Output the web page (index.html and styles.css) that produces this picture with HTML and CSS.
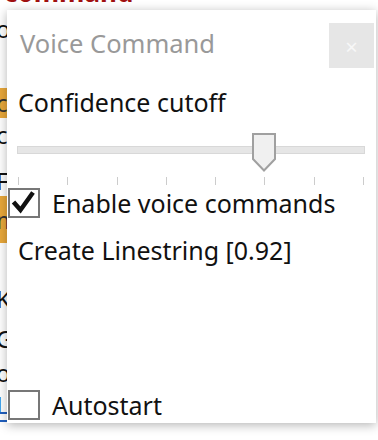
FILE: index.html
```html
<!DOCTYPE html>
<html lang="en">
<head>
  <meta charset="UTF-8" />
  <title>Voice Command</title>
  <link rel="stylesheet" href="styles.css">
</head>
<body>
  <div class="page">
    <div class="page-title">Voice command</div>
    <div class="page-edge">
      <div class="page-line l-o1">o</div>
      <div class="page-line l-c1 hl">c</div>
      <div class="page-line l-c2">c</div>
      <div class="page-line l-f">F</div>
      <div class="page-line l-m hl">m</div>
      <div class="page-line l-k">K</div>
      <div class="page-line l-g">G</div>
      <div class="page-line l-o2">o</div>
      <div class="page-line l-l">L</div>
    </div>
  </div>

  <div class="dialog">
    <div class="dialog-header">
      <div class="dialog-title">Voice Command</div>
      <button class="close-btn">&times;</button>
    </div>

    <div class="label">Confidence cutoff</div>
    <div class="slider">
      <div class="track"></div>
      <svg class="thumb" width="24" height="39" viewBox="0 0 24 39">
        <path d="M1 1 H23 V26 L12 37.5 L1 26 Z" fill="#f0f0f0" stroke="#a0a0a0" stroke-width="2"/>
      </svg>
      <div class="ticks">
        <span></span><span></span><span></span><span></span>
        <span></span><span></span><span></span><span></span>
      </div>
    </div>

    <label class="check-row">
      <span class="box">
        <svg width="28" height="26" viewBox="0 0 28 26">
          <path d="M3.5 12 L10.5 20 L23 2.5" fill="none" stroke="#111" stroke-width="4.5"/>
        </svg>
      </span>
      Enable voice commands
    </label>

    <div class="result">Create Linestring [0.92]</div>

    <label class="check-row autostart">
      <span class="box"></span>
      Autostart
    </label>
  </div>
</body>
</html>
```

FILE: styles.css
```css
body {
  margin: 0;
  background: #fff;
  font-family: "Noto Sans", "Open Sans", sans-serif;
  width: 378px;
  height: 440px;
  overflow: hidden;
  position: relative;
}
.page {
  font-size: 24px;
  color: #111;
}
.page-title {
  position: absolute;
  top: -23px;
  left: -72px;
  color: #a01010;
  font-weight: bold;
  font-size: 26px;
  line-height: 30px;
  white-space: nowrap;
}
.page-edge {
  position: absolute;
  left: 0;
  top: 0;
  width: 7px;
  height: 440px;
  overflow: hidden;
}
.page-line {
  position: absolute;
  left: -4px;
  width: 11px;
  line-height: 30px;
}
.page-line.hl {
  background: #e9a83a;
  color: #333;
}
.l-o1 { top: 14px; }
.l-c1 { top: 88px; }
.l-c2 { top: 120px; }
.l-f { top: 166px; }
.l-m { top: 196px; height: 47px; line-height: 47px; }
.l-k { top: 284px; }
.l-g { top: 324px; }
.l-o2 { top: 358px; }
.l-l { top: 390px; color: #2060c0; border-bottom: 2px solid #2060c0; }

.dialog {
  position: absolute;
  left: 7px;
  top: 10px;
  width: 369px;
  height: 413px;
  background: #fff;
  box-shadow: 0 2px 10px rgba(0, 0, 0, 0.3);
  display: flex;
  flex-direction: column;
  color: #111;
  font-size: 25px;
  line-height: 30px;
}
.dialog-header {
  display: flex;
  justify-content: space-between;
  align-items: flex-start;
  padding: 13px 2px 0 13px;
}
.dialog-title {
  color: #999;
  font-size: 25.5px;
  margin-top: 5px;
}
.close-btn {
  width: 45px;
  height: 45px;
  border: none;
  background: #e6e6e6;
  color: #f7f7f7;
  font-size: 22px;
  font-family: inherit;
  padding: 0;
}
.label {
  padding-left: 11px;
  margin-top: 19px;
}
.slider {
  position: relative;
  margin: 16px 11px 0 10px;
  height: 52px;
}
.track {
  position: absolute;
  left: 0;
  right: 0;
  top: 13px;
  height: 6px;
  background: #e6e6e6;
  border: 1px solid #d8d8d8;
}
.thumb {
  position: absolute;
  left: 235px;
  top: 0;
}
.ticks {
  position: absolute;
  left: 1px;
  right: 1px;
  top: 44px;
  display: flex;
  justify-content: space-between;
}
.ticks span {
  width: 1px;
  height: 8px;
  background: #ccc;
}
.check-row {
  display: flex;
  align-items: center;
  gap: 12px;
  margin-top: 3px;
  padding-left: 1px;
  height: 30px;
}
.box {
  width: 28px;
  height: 26px;
  border: 2px solid #777;
  display: flex;
  align-items: center;
  justify-content: center;
}
.result {
  padding-left: 11px;
  margin-top: 17px;
}
.autostart {
  margin-top: auto;
  margin-bottom: 3px;
}
```
